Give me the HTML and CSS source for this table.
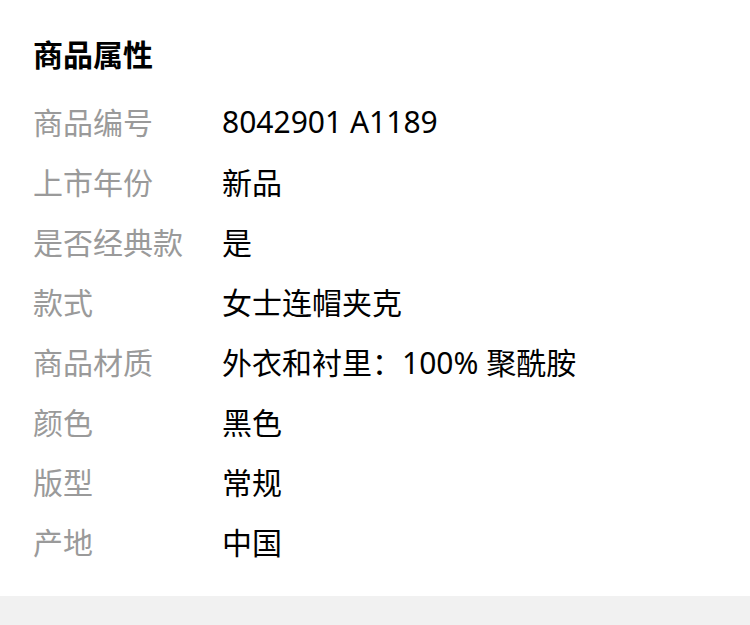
FILE: index.html
```html
<!DOCTYPE html>
<html lang="zh-CN">
<head>
    <meta charset="UTF-8">
    <meta name="viewport" content="width=device-width, initial-scale=1.0">
    <title>商品属性</title>
    <link rel="stylesheet" href="styles.css">
</head>
<body>
    <div class="attrs">
        <h2 class="attrs-title">商品属性</h2>
        <div class="attr-row"><span class="attr-label">商品编号</span><span class="attr-value">8042901 A1189</span></div>
        <div class="attr-row"><span class="attr-label">上市年份</span><span class="attr-value">新品</span></div>
        <div class="attr-row"><span class="attr-label">是否经典款</span><span class="attr-value">是</span></div>
        <div class="attr-row"><span class="attr-label">款式</span><span class="attr-value">女士连帽夹克</span></div>
        <div class="attr-row"><span class="attr-label">商品材质</span><span class="attr-value">外衣和衬里：100% 聚酰胺</span></div>
        <div class="attr-row"><span class="attr-label">颜色</span><span class="attr-value">黑色</span></div>
        <div class="attr-row"><span class="attr-label">版型</span><span class="attr-value">常规</span></div>
        <div class="attr-row"><span class="attr-label">产地</span><span class="attr-value">中国</span></div>
    </div>
    <div class="footer-bar"></div>
</body>
</html>
```
FILE: styles.css
```css
body {
    margin: 0;
    background-color: #fff;
    font-family: "Noto Sans", "Noto Sans CJK SC", sans-serif;
    color: #111;
}
.attrs {
    padding: 34px 33px 25px;
}
.attrs-title {
    margin: 0 0 15px;
    font-size: 30px;
    font-weight: 700;
    line-height: 42px;
    color: #000;
}
.attr-row {
    display: flex;
    height: 60px;
    align-items: center;
    font-size: 30px;
}
.attr-label {
    width: 189px;
    flex-shrink: 0;
    color: #9a9a9a;
}
.attr-value {
    color: #000;
}
.footer-bar {
    height: 30px;
    background-color: #f1f1f1;
}
```
